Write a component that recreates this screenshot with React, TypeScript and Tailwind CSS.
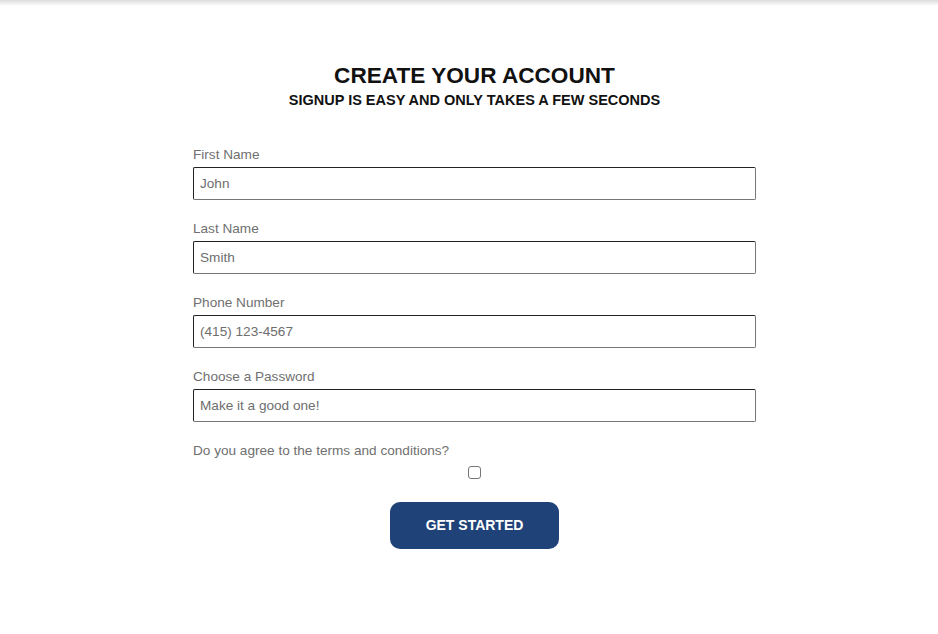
import React from 'react';

const fields = [
  { label: 'First Name', placeholder: 'John', type: 'text' },
  { label: 'Last Name', placeholder: 'Smith', type: 'text' },
  { label: 'Phone Number', placeholder: '(415) 123-4567', type: 'tel' },
  { label: 'Choose a Password', placeholder: 'Make it a good one!', type: 'text' },
];

export default function App() {
  return (
    <div className="min-h-[634px] bg-white font-['Liberation_Sans',Arial,sans-serif]">
      <div className="h-[6px] bg-gradient-to-b from-[#dcdcdc] to-white" />
      <div className="flex justify-center pl-[11px] pt-[57px]">
        <form className="w-[563px]" onSubmit={(e) => e.preventDefault()}>
          <div className="text-center text-[#111]">
            <h1 className="text-[22.6px] font-bold leading-[25px]">CREATE YOUR ACCOUNT</h1>
            <h2 className="mt-[4px] text-[14.5px] font-bold leading-[17px]">
              SIGNUP IS EASY AND ONLY TAKES A FEW SECONDS
            </h2>
          </div>

          <div className="mt-[37px] flex flex-col gap-[20px]">
            {fields.map((f) => (
              <div key={f.label}>
                <label className="block pt-[1px] text-[13.6px] leading-[16px] text-[#707070]">{f.label}</label>
                <input
                  type={f.type}
                  placeholder={f.placeholder}
                  className="mt-[4px] block h-[33px] w-full rounded-[2px] border border-[#767676] border-t-[#222] border-l-[#222] bg-white px-[6px] text-[13.6px] text-[#333] placeholder:text-[#6e6e6e] outline-none"
                />
              </div>
            ))}
            <div>
              <label className="block pt-[1px] text-[13.6px] leading-[16px] text-[#707070]">
                Do you agree to the terms and conditions?
              </label>
              <div className="mt-[7px] flex justify-center">
                <input
                  type="checkbox"
                  className="h-[13px] w-[13px] appearance-none rounded-[3px] border border-[#767676] bg-white"
                />
              </div>
            </div>
          </div>

          <div className="mt-[23px] flex justify-center">
            <button
              type="submit"
              className="h-[47px] w-[169px] rounded-[10px] bg-[#1f4378] text-[14px] font-bold text-white"
            >
              GET STARTED
            </button>
          </div>
        </form>
      </div>
    </div>
  );
}
